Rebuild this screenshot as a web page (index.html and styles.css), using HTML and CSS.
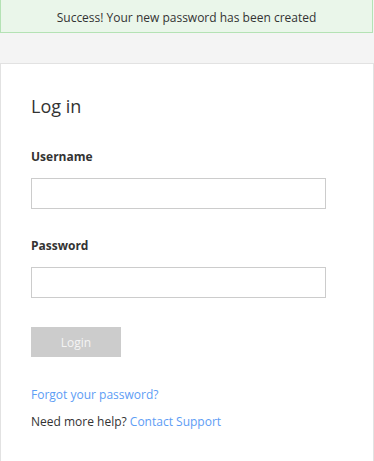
FILE: index.html
```html
<!DOCTYPE html>
<html lang="en">
<head>
  <meta charset="UTF-8">
  <title>Log in</title>
  <link rel="stylesheet" href="styles.css">
</head>
<body>

  <div class="alert-success">Success! Your new password has been created</div>

  <div class="login-card">
    <h1 class="login-title">Log in</h1>

    <form class="login-form">
      <label class="field-label" for="username">Username</label>
      <input class="field-input" type="text" id="username">

      <label class="field-label" for="password">Password</label>
      <input class="field-input" type="password" id="password">

      <button class="btn-login" type="submit" disabled>Login</button>
    </form>

    <p class="help-line"><a href="#">Forgot your password?</a></p>
    <p class="help-line">Need more help? <a href="#">Contact Support</a></p>
  </div>

</body>
</html>
```

FILE: styles.css
```css
body {
  margin: 0;
  height: 100vh;
  display: flex;
  flex-direction: column;
  font-family: "Open Sans", Arial, sans-serif;
  background-color: #f4f4f4;
  color: #333;
  overflow: hidden;
}

.alert-success {
  width: 371px;
  height: 30px;
  padding-top: 2px;
  line-height: 32px;
  text-align: center;
  font-size: 12px;
  color: #333;
  background: #eaf6ea;
  border: 1px solid #b4e2b4;
  border-top: none;
}

.login-card {
  flex: 1;
  margin-top: 30px;
  padding: 22px 30px 20px 30px;
  background: #fff;
  border: 1px solid #e2e2e2;
  border-bottom: none;
}

.login-title {
  margin: 0 0 23px 0;
  font-size: 18px;
  font-weight: normal;
  line-height: 40px;
}

.login-form {
  display: flex;
  flex-direction: column;
  align-items: flex-start;
}

.field-label {
  font-size: 12px;
  line-height: 16px;
  font-weight: bold;
  margin-bottom: 13px;
}

.field-input {
  width: 295px;
  height: 31px;
  box-sizing: border-box;
  border: 1px solid #ccc;
  margin: 0 0 29px 0;
  padding: 4px 8px;
}

.btn-login {
  width: 90px;
  height: 30px;
  border: none;
  background: #ccc;
  color: #f4f4f4;
  font-family: inherit;
  font-size: 12px;
}

.help-line {
  margin: 30px 0 0 0;
  font-size: 12px;
  line-height: 16px;
}

.help-line + .help-line {
  margin-top: 11px;
}

.help-line a {
  color: #5d9df5;
  text-decoration: none;
}
```
